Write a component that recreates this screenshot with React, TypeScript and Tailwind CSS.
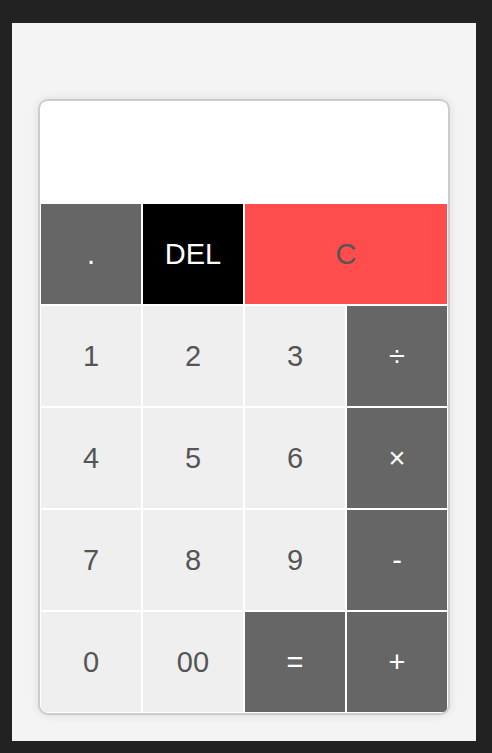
const keys = [
    { label: ".", className: "bg-[#666666] text-white" },
    { label: "DEL", className: "bg-black text-white" },
    { label: "C", className: "col-span-2 bg-[#ff4d4d] text-[#555555]" },
    { label: "1", className: "bg-[#efefef] text-[#555555]" },
    { label: "2", className: "bg-[#efefef] text-[#555555]" },
    { label: "3", className: "bg-[#efefef] text-[#555555]" },
    { label: "÷", className: "bg-[#666666] text-white" },
    { label: "4", className: "bg-[#efefef] text-[#555555]" },
    { label: "5", className: "bg-[#efefef] text-[#555555]" },
    { label: "6", className: "bg-[#efefef] text-[#555555]" },
    { label: "×", className: "bg-[#666666] text-white" },
    { label: "7", className: "bg-[#efefef] text-[#555555]" },
    { label: "8", className: "bg-[#efefef] text-[#555555]" },
    { label: "9", className: "bg-[#efefef] text-[#555555]" },
    { label: "-", className: "bg-[#666666] text-white" },
    { label: "0", className: "bg-[#efefef] text-[#555555]" },
    { label: "00", className: "bg-[#efefef] text-[#555555]" },
    { label: "=", className: "bg-[#666666] text-white" },
    { label: "+", className: "bg-[#666666] text-white" },
];

export default function App() {
    return (
        <div className="min-h-[753px] bg-[#222222] pt-[23px] pb-[12px] pl-[12px] pr-[16px] font-['Liberation_Sans',Arial,sans-serif]">
            <div className="h-[718px] bg-[#f4f4f4] pt-[76px]">
                {/* Calculator */}
                <div className="mx-auto w-[412px] overflow-hidden rounded-[10px] border-2 border-[#cccccc] bg-white p-[1px] shadow-[0_0_10px_rgba(0,0,0,0.1)]">
                    {/* Display */}
                    <div className="h-[100px] bg-white" />

                    {/* Keys */}
                    <div className="mt-[2px] grid grid-cols-[repeat(4,100px)] gap-[2px]">
                        {keys.map((key) => (
                            <button
                                key={key.label}
                                className={`flex h-[100px] items-center justify-center text-[29px] leading-none ${key.className}`}
                            >
                                {key.label}
                            </button>
                        ))}
                    </div>
                </div>
            </div>
        </div>
    );
}
